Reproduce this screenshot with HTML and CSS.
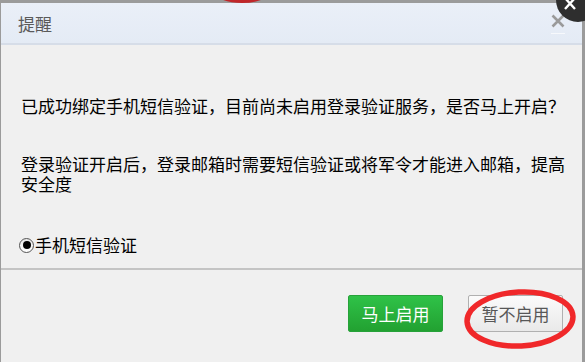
FILE: index.html
```html
<!DOCTYPE html>
<html lang="zh-CN">
<head>
	<meta charset="UTF-8">
	<meta name="viewport" content="width=device-width, initial-scale=1.0">
	<title>提醒</title>
	<link rel="stylesheet" href="styles.css">
</head>
<body>
	<div class="dialog">
		<div class="dialog-header">
			<span class="dialog-title">提醒</span>
			<span class="close-btn">
				<svg width="14" height="14" viewBox="0 0 14 14">
					<path d="M1.5 1.5 L12.5 12.5 M12.5 1.5 L1.5 12.5" stroke="#9a9a9a" stroke-width="2.6" fill="none"/>
				</svg>
			</span>
		</div>
		<div class="dialog-body">
			<p class="msg">已成功绑定手机短信验证，目前尚未启用登录验证服务，是否马上开启？</p>
			<p class="msg msg-info">登录验证开启后，登录邮箱时需要短信验证或将军令才能进入邮箱，提高安全度</p>
			<label class="radio-row">
				<span class="radio"><span class="radio-dot"></span></span>手机短信验证
			</label>
		</div>
		<div class="dialog-footer">
			<button class="btn btn-ok">马上启用</button>
			<button class="btn btn-cancel">暂不启用</button>
		</div>
	</div>

	<!-- annotations drawn over the screenshot -->
	<svg class="mark mark-top" width="60" height="4" viewBox="0 0 60 4">
		<ellipse cx="30" cy="-10" rx="27" ry="11" fill="none" stroke="#c0262a" stroke-width="4"/>
	</svg>
	<svg class="mark mark-corner" width="30" height="24" viewBox="0 0 30 24">
		<circle cx="22" cy="0" r="22" fill="#2e2e2e"/>
		<path d="M9 -2 L19 9 M19 -2 L9 9" stroke="#fff" stroke-width="2.4" fill="none"/>
	</svg>
	<svg class="mark mark-circle" width="120" height="66" viewBox="0 0 120 66">
		<ellipse cx="60" cy="33" rx="53" ry="27" fill="none" stroke="#f0282a" stroke-width="5.5" transform="rotate(-3 60 33)"/>
	</svg>
</body>
</html>
```

FILE: styles.css
```css
* {
	box-sizing: border-box;
}

body {
	margin: 0;
	width: 585px;
	height: 362px;
	overflow: hidden;
	background-color: #9b9b9b; /* gray frame around dialog */
	font-family: "Noto Sans CJK SC", "Microsoft YaHei", sans-serif;
	position: relative;
}

.dialog {
	margin: 3px 3px 0 1px;
	height: 359px;
	background-color: #f0f0f0;
	display: flex;
	flex-direction: column;
}

.dialog-header {
	height: 42px;
	padding-left: 17px;
	padding-right: 17px;
	display: flex;
	align-items: center;
	justify-content: space-between;
	background: linear-gradient(#eaeff8, #e4ebf5);
	border-bottom: 2px solid #d6dde8;
}

.dialog-title {
	font-size: 17px;
	color: #5a5a5a;
	line-height: 20px;
	margin-top: 2px;
}

.close-btn {
	display: flex;
	margin-top: 2px;
	padding-bottom: 5px;
	border-bottom: 1px solid #f7f9fc;
}

.dialog-body {
	height: 223px;
	padding: 51px 14px 0 20px;
	font-size: 17px;
	color: #000;
}

.msg {
	margin: 0;
	line-height: 20px;
}

.msg-info {
	margin-top: 38px;
}

.radio-row {
	display: flex;
	align-items: center;
	margin-top: 41px;
	margin-left: -2px;
	line-height: 20px;
}

.radio {
	width: 15px;
	height: 15px;
	border-radius: 50%;
	border: 1px solid #555;
	background: linear-gradient(#e6e6e6, #fff);
	display: flex;
	align-items: center;
	justify-content: center;
	margin-right: 1px;
}

.radio-dot {
	width: 8px;
	height: 8px;
	border-radius: 50%;
	background-color: #000;
}

.dialog-footer {
	flex: 1;
	border-top: 2px solid #c4c4c4;
	display: flex;
	justify-content: flex-end;
	align-items: flex-start;
	gap: 25px;
	padding: 25px 19px 0 0;
}

.btn {
	width: 95px;
	height: 37px;
	border-radius: 2px;
	font-family: "Noto Sans CJK SC", sans-serif;
	font-size: 17px;
	padding: 0;
	cursor: pointer;
}

.btn-ok {
	color: #fff;
	background: linear-gradient(#2fc248, #22a131);
	border: 1px solid #27a23a;
}

.btn-cancel {
	color: #575757;
	background: linear-gradient(#fbfbfb, #e9e9e9);
	border: 1px solid #b0b0b0;
}

/* overlay marks */
.mark {
	position: absolute;
	pointer-events: none;
}

.mark-top {
	left: 212px;
	top: 0;
}

.mark-corner {
	left: 556px;
	top: 0;
}

.mark-circle {
	left: 460px;
	top: 286px;
}
```
